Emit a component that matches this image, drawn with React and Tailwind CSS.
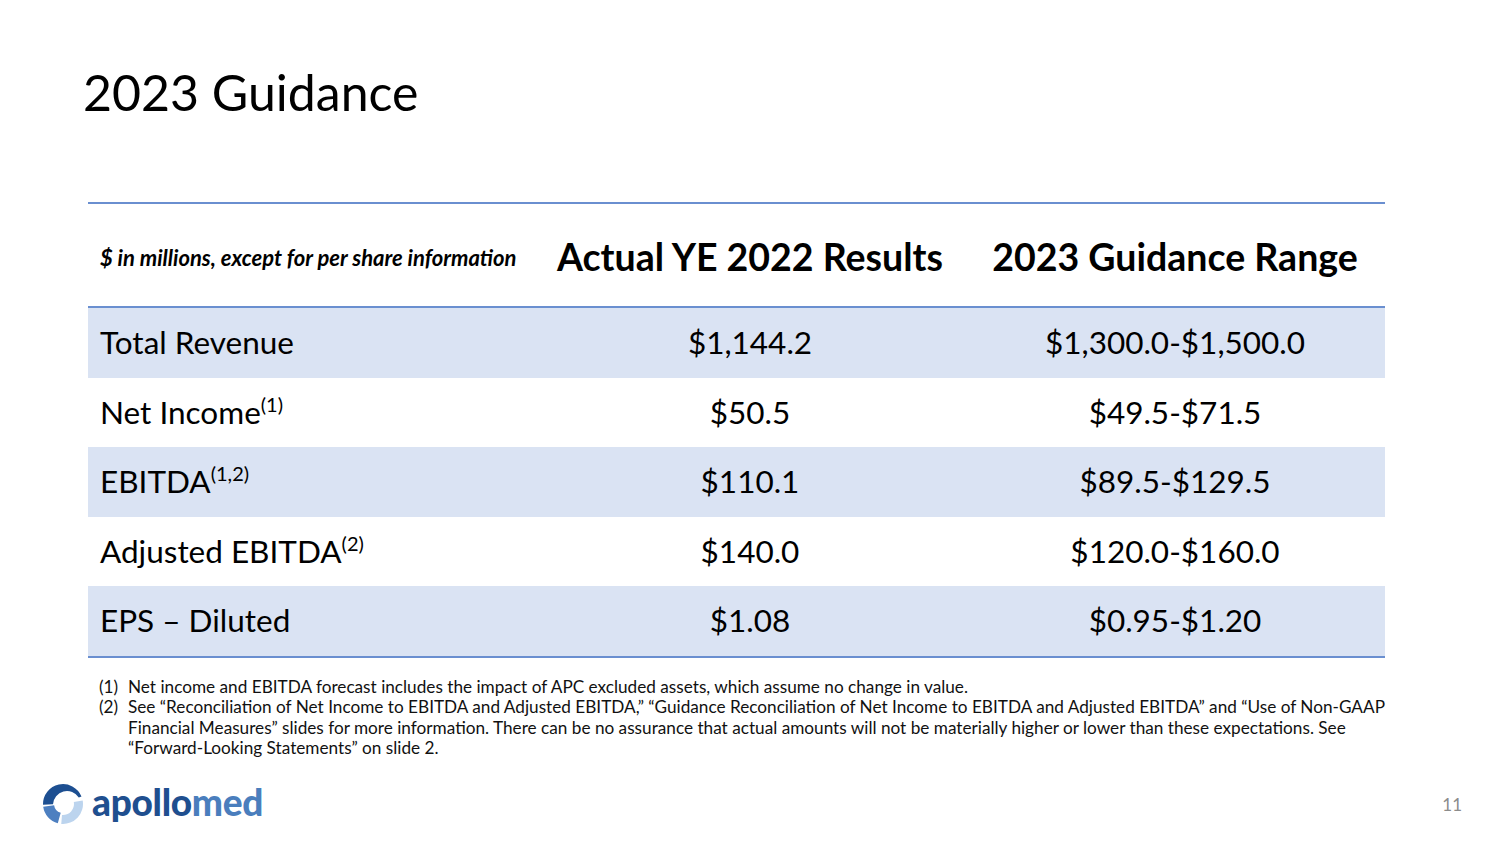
import React from 'react';

const rows = [
  { label: 'Total Revenue', sup: null, actual: '$1,144.2', range: '$1,300.0-$1,500.0', shade: true },
  { label: 'Net Income', sup: '(1)', actual: '$50.5', range: '$49.5-$71.5', shade: false },
  { label: 'EBITDA', sup: '(1,2)', actual: '$110.1', range: '$89.5-$129.5', shade: true },
  { label: 'Adjusted EBITDA', sup: '(2)', actual: '$140.0', range: '$120.0-$160.0', shade: false },
  { label: 'EPS – Diluted', sup: null, actual: '$1.08', range: '$0.95-$1.20', shade: true },
];

function Logo(){
  return (
    <div className="flex items-center gap-[8px]">
      <svg width="42" height="42" viewBox="0 0 42 42">
        <path d="M1.02 21.7 A20 20 0 0 1 39.5 13.5 L36.8 14.6 A14 14 0 0 0 11 21.35 Z" fill="#1d4f91" />
        <path d="M40.7 17.5 A20 20 0 0 1 19.26 40.9 L20 32 A11 11 0 0 0 31.8 19.1 Z" fill="#bcd4ee" />
        <path d="M15.8 40.3 A20 20 0 0 1 1.2 23.8 L12.1 22.25 A9 9 0 0 0 18.7 29.7 Z" fill="#4d7fc0" />
      </svg>
      <div className="text-[37px] font-black leading-none tracking-[-0.3px] pb-[5px]" style={{ fontFamily: 'Lato, sans-serif' }}>
        <span className="text-[#1f4f8f]">apollo</span><span className="text-[#4a7ebd]">med</span>
      </div>
    </div>
  );
}

export default function App(){
  return (
    <div className="w-[1500px] h-[844px] bg-white flex flex-col text-black" style={{ fontFamily: 'Lato, "Open Sans", sans-serif' }}>
      <h1 className="pt-[62px] pl-[83px] text-[50px] leading-[60px] font-normal">2023 Guidance</h1>

      <div className="mt-[80px] ml-[88px] w-[1297px] border-t-2 border-[#6a8fd0]">
        <div className="flex items-center h-[104px] pt-[4px] border-b-2 border-[#6a8fd0]">
          <div className="w-[447px] pl-[12px] text-[22px] font-bold italic">$ in millions, except for per share information</div>
          <div className="w-[430px] text-center text-[37.5px] font-bold">Actual YE 2022 Results</div>
          <div className="w-[420px] text-center text-[37.5px] font-bold">2023 Guidance Range</div>
        </div>
        {rows.map((r, i) => (
          <div key={i} className={`flex items-center h-[69.5px] text-[31.5px] ${r.shade ? 'bg-[#dae3f3]' : 'bg-white'}`}>
            <div className="w-[447px] pl-[12px]">
              {r.label}
              {r.sup && <sup className="text-[20px] top-[-12px]">{r.sup}</sup>}
            </div>
            <div className="w-[430px] text-center">{r.actual}</div>
            <div className="w-[420px] text-center">{r.range}</div>
          </div>
        ))}
        <div className="border-t-2 border-[#6a8fd0]" />
      </div>

      <div className="mt-[19px] ml-[99px] mr-[92px] text-[17.2px] leading-[20.5px] text-[#111]">
        <div className="flex">
          <span className="w-[29px] shrink-0">(1)</span>
          <span>Net income and EBITDA forecast includes the impact of APC excluded assets, which assume no change in value.</span>
        </div>
        <div className="flex">
          <span className="w-[29px] shrink-0">(2)</span>
          <span>See “Reconciliation of Net Income to EBITDA and Adjusted EBITDA,” “Guidance Reconciliation of Net Income to EBITDA and Adjusted EBITDA” and “Use of Non-GAAP Financial Measures” slides for more information. There can be no assurance that actual amounts will not be materially higher or lower than these expectations. See “Forward-Looking Statements” on slide 2.</span>
        </div>
      </div>

      <div className="mt-[24px] pl-[42px] pr-[38px] flex items-center justify-between">
        <Logo />
        <div className="text-[17px] text-[#8c8c8c] pt-[2px]">11</div>
      </div>
    </div>
  );
}
